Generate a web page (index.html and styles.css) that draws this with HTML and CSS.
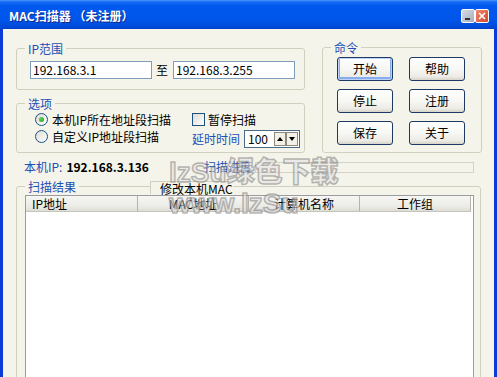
FILE: index.html
```html
<!DOCTYPE html>
<html>
<head>
<meta charset="utf-8">
<link rel="stylesheet" href="styles.css">
</head>
<body>
<div class="window">
  <div class="titlebar">
    <span class="title">MAC扫描器 （未注册）</span>
    <div class="tb-buttons">
      <span class="tb-btn tb-min"><span class="min-bar"></span></span>
      <span class="tb-btn tb-close"><svg width="8" height="8" viewBox="0 0 8 8"><path d="M1 1L7 7M7 1L1 7" stroke="#fff" stroke-width="1.6"/></svg></span>
    </div>
  </div>
  <div class="client">
    <div class="top">
      <div class="left">
        <fieldset class="group ip-group">
          <legend>IP范围</legend>
          <div class="ip-row">
            <div class="input ip">192.168.3.1</div>
            <span class="to">至</span>
            <div class="input ip">192.168.3.255</div>
          </div>
        </fieldset>
        <fieldset class="group opt-group">
          <legend>选项</legend>
          <div class="opt-grid">
            <div class="row r1"><span class="radio checked"></span>本机IP所在地址段扫描</div>
            <div class="row r1"><span class="check"></span>暂停扫描</div>
            <div class="row r2"><span class="radio"></span>自定义IP地址段扫描</div>
            <div class="row r2 delay">
              <span class="blue">延时时间</span>
              <div class="spin">
                <span class="spin-val">100</span>
                <span class="spin-btn"><svg width="6" height="4" viewBox="0 0 6 4"><path d="M0 4L3 0L6 4Z" fill="#000"/></svg></span>
                <span class="spin-btn"><svg width="6" height="4" viewBox="0 0 6 4"><path d="M0 0L6 0L3 4Z" fill="#000"/></svg></span>
              </div>
            </div>
          </div>
        </fieldset>
      </div>
      <fieldset class="group cmd-group">
        <legend>命令</legend>
        <div class="cmd-grid">
          <button class="btn default">开始</button>
          <button class="btn">帮助</button>
          <button class="btn">停止</button>
          <button class="btn">注册</button>
          <button class="btn">保存</button>
          <button class="btn">关于</button>
        </div>
      </fieldset>
    </div>
    <div class="info-row">
      <div class="ip-info"><span class="blue">本机IP:</span><b class="localip">192.168.3.136</b></div>
      <span class="blue">扫描进度</span>
      <div class="progress"></div>
    </div>
    <fieldset class="group result-group">
      <legend>扫描结果</legend>
      <div class="listview">
        <div class="lv-header">
          <div class="lv-col c1">IP地址</div>
          <div class="lv-col">MAC地址</div>
          <div class="lv-col">计算机名称</div>
          <div class="lv-col">工作组</div>
        </div>
      </div>
    </fieldset>
    <div class="mac-box">修改本机MAC</div>
    <div class="watermark">
      <div>lzSu绿色下载</div>
      <div>www.lzSu</div>
    </div>
  </div>
</div>
</body>
</html>
```

FILE: styles.css
```css
* { box-sizing: border-box; }
body {
  margin: 0;
  overflow: hidden;
  font: 12px/14px "Noto Sans CJK SC", "Liberation Sans", sans-serif;
  color: #000;
}
.window {
  width: 497px;
  height: 377px;
  background: #0B3BD6;
  display: flex;
  flex-direction: column;
  overflow: hidden;
}
.titlebar {
  height: 29px;
  flex: none;
  display: flex;
  align-items: center;
  justify-content: space-between;
  padding: 2px 8px 0 9px;
  background: linear-gradient(#4A98FA 0, #1469F2 2px, #0058EE 6px, #0056EA 20px, #0049D8 27px, #003FC6 29px);
  color: #fff;
}
.title {
  font-weight: bold;
  font-size: 12px;
  text-shadow: 1px 1px 0 #0A2A8A;
}
.tb-buttons { display: flex; }
.tb-btn {
  width: 14px;
  height: 14px;
  border: 1px solid #fff;
  border-radius: 2px;
  display: flex;
  align-items: center;
  justify-content: center;
}
.tb-min {
  background: linear-gradient(135deg, #D8DCE6, #A4ACBC);
  align-items: flex-end;
  justify-content: flex-start;
  padding: 0 0 2px 3px;
}
.min-bar { width: 5px; height: 2px; background: #333; }
.tb-close { background: linear-gradient(135deg, #F08A70, #D2452A); }

.client {
  flex: 1;
  margin: 0 3px;
  background: #F5F4EA;
  padding-left: 13px;
  position: relative;
}
.top { display: flex; gap: 17px; align-items: flex-start; }
.left { width: 289px; display: flex; flex-direction: column; gap: 6px; margin-top: 12px; }

.group {
  margin: 0;
  padding: 0;
  border: 1px solid #D0D0BF;
  border-radius: 3px;
  min-width: 0;
}
legend {
  margin-left: 8px;
  padding: 0 3px;
  color: #1B50B5;
  line-height: 15px;
  height: 15px;
}
.blue { color: #1B50B5; }

.ip-row { display: flex; align-items: center; padding: 5px 0 10px 13px; }
.input {
  height: 18px;
  border: 1px solid #7F9DB9;
  background: #fff;
  padding-left: 2px;
  line-height: 16px;
}
.ip { width: 122px; }
.to { margin: 0 5px 0 4px; }

.opt-grid {
  display: grid;
  grid-template-columns: 157px auto;
  grid-template-rows: 13px 18px;
  row-gap: 4px;
  padding: 2px 0 4px 18px;
}
.row { display: flex; align-items: center; white-space: nowrap; }
.r2 { align-items: flex-start; line-height: 13px; }
.radio {
  width: 13px;
  height: 13px;
  border-radius: 50%;
  border: 1px solid #1C5180;
  background: linear-gradient(135deg, #DCDBD3, #fff);
  margin-right: 4px;
  flex: none;
  display: flex;
  align-items: center;
  justify-content: center;
}
.radio.checked::after {
  content: "";
  width: 5px;
  height: 5px;
  border-radius: 50%;
  background: radial-gradient(circle at 40% 40%, #5CD65C, #1A9A1A);
}
.check {
  width: 13px;
  height: 13px;
  border: 1px solid #1C5180;
  background: linear-gradient(135deg, #DCDBD3, #fff);
  margin-right: 3px;
  flex: none;
}
.row.delay { align-items: center; gap: 4px; line-height: 14px; }
.spin {
  width: 56px;
  height: 18px;
  border: 1px solid #4A6A8A;
  background: #fff;
  display: flex;
  align-items: center;
  padding: 1px;
}
.spin-val { flex: 1; padding-left: 2px; line-height: 14px; }
.spin-btn {
  width: 12px;
  height: 14px;
  border: 1px solid #8C8A7C;
  background: #F3F1E6;
  display: flex;
  align-items: center;
  justify-content: center;
}

.cmd-group { width: 160px; margin-top: 11px; }
.cmd-grid {
  display: grid;
  grid-template-columns: 56px 56px;
  grid-auto-rows: 24px;
  column-gap: 16px;
  row-gap: 8px;
  padding: 2px 0 7px 14px;
}
.btn {
  font: inherit;
  color: #000;
  margin: 0;
  padding: 0;
  border: 1px solid #1C3A64;
  border-radius: 3px;
  background: linear-gradient(#FFFFFF 0, #F7F7F3 50%, #ECEBE5 85%, #D6D2C6 100%);
}
.btn.default {
  box-shadow: inset 0 0 0 1px #BCD2F8, inset 0 -1px 0 2px #89ADEC;
}

.info-row {
  display: flex;
  align-items: center;
  height: 14px;
  margin: 7px 0 0 8px;
}
.ip-info { width: 180px; white-space: nowrap; }
.localip { margin-left: 4px; font-weight: bold; }
.progress {
  margin-left: 3px;
  width: 219px;
  height: 11px;
  border: 1px solid #D4D2C4;
}

.result-group { width: 465px; height: 260px; margin-top: 5px; }
.listview {
  margin: 1px 6px 0 8px;
  height: 240px;
  border: 1px solid #9C9C9C;
  background: #fff;
}
.lv-header { display: flex; height: 16px; }
.lv-col {
  width: 111px;
  height: 16px;
  background: linear-gradient(#F6F6F4, #EBEBE6 70%, #DEDDD6);
  border-right: 1px solid #B5B4AC;
  border-bottom: 1px solid #C6C5BC;
  text-align: center;
  line-height: 15px;
}
.lv-col.c1 { width: 112px; text-align: left; padding-left: 6px; }

.mac-box {
  position: absolute;
  left: 147px;
  top: 152px;
  height: 13px;
  padding-left: 9px;
  border-left: 1px solid #D0D0BF;
  border-top: 1px solid #D0D0BF;
  background: #F5F4EA;
  line-height: 13px;
  white-space: nowrap;
}
.watermark {
  position: absolute;
  left: 166px;
  top: 128px;
  font: 900 28px/31px "Liberation Sans", "Noto Sans CJK SC", sans-serif;
  color: rgba(225, 225, 225, 0.55);
  -webkit-text-stroke: 1.5px rgba(120, 120, 120, 0.5);
  white-space: nowrap;
  pointer-events: none;
}
```
